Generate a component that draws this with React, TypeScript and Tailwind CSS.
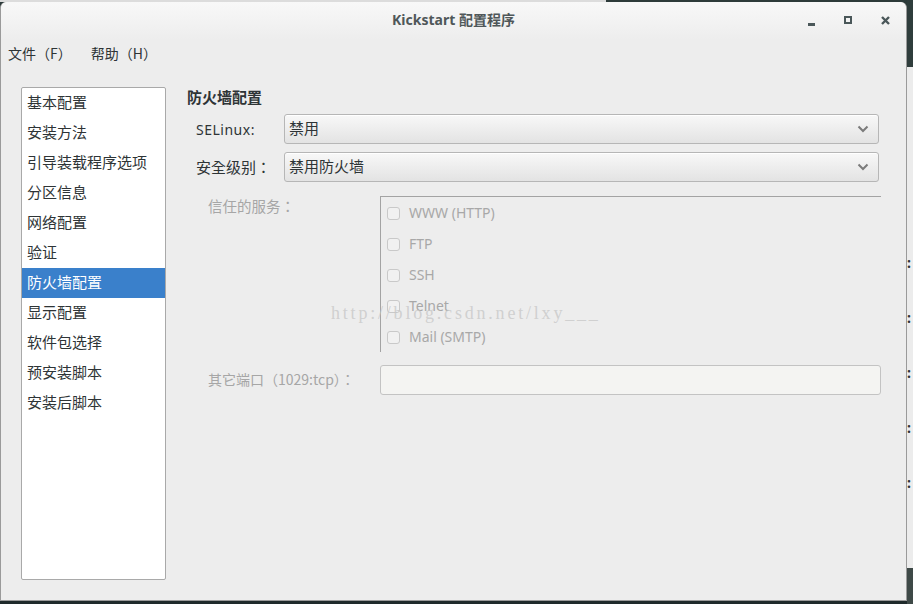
import React from 'react';

const font = { fontFamily: '"Noto Sans", "Noto Sans CJK SC", sans-serif' };
// centred full-width punctuation, as in the original GTK rendering
const cjk = { fontFamily: '"Noto Sans CJK TC", "Noto Sans", sans-serif' };

const navItems = [
  '基本配置',
  '安装方法',
  '引导装载程序选项',
  '分区信息',
  '网络配置',
  '验证',
  '防火墙配置',
  '显示配置',
  '软件包选择',
  '预安装脚本',
  '安装后脚本',
];

const services = ['WWW (HTTP)', 'FTP', 'SSH', 'Telnet', 'Mail (SMTP)'];

function Chevron() {
  return (
    <svg width="12" height="8" viewBox="0 0 12 8" className="shrink-0">
      <polyline points="1.5,1.5 6,6 10.5,1.5" fill="none" stroke="#7b7b7b" strokeWidth="2" />
    </svg>
  );
}

function Combo({ value }: { value: string }) {
  return (
    <div className="flex-1 h-[30px] flex items-center justify-between pl-[4px] pr-[9px] rounded-[3px] border border-[#b6b6b6] bg-gradient-to-b from-[#f8f8f8] to-[#e3e3e3] shadow-[inset_0_1px_0_#ffffff] text-[15px] text-[#2e3436]">
      <span className="-mt-[1px]">{value}</span>
      <Chevron />
    </div>
  );
}

export default function App() {
  return (
    <div className="w-[913px] h-[604px] flex overflow-hidden bg-[#2d3b3a]" style={font}>
      {/* main column */}
      <div className="w-[907px] flex flex-col">
        <div className="h-[2px] flex">
          <div className="w-[606px] bg-[#dcdcdc]" />
          <div className="flex-1 bg-[#2d3b3a]" />
        </div>

        {/* window */}
        <div className="flex-1 flex flex-col bg-[#ededed] rounded-t-[6px] border-l border-r border-b border-[#9a9a9a]">
          {/* title bar */}
          <div className="h-[38px] relative flex items-center justify-center pb-[4px] rounded-t-[6px] bg-gradient-to-b from-[#f8f8f8] to-[#ededed]">
            <span className="text-[14px] font-bold text-[#4f5759]">Kickstart 配置程序</span>
            <div className="absolute right-[16px] top-0 h-full flex items-center gap-[29px] pb-[2px] text-[#4a5759]">
              <div className="w-[7px] h-[3px] mt-[8px] bg-[#4a5759]" />
              <div className="w-[8px] h-[8px] border-[2.5px] border-[#4a5759]" />
              <svg width="9" height="9" viewBox="0 0 9 9">
                <path d="M1 1 L8 8 M8 1 L1 8" stroke="#4a5759" strokeWidth="2.4" />
              </svg>
            </div>
          </div>

          {/* menu bar */}
          <div className="h-[28px] flex items-center gap-[19px] px-[7px] pb-[2px] text-[14px] text-[#2e3436]" style={cjk}>
            <span>文件（F）</span>
            <span>帮助（H）</span>
          </div>

          {/* content */}
          <div className="flex-1 flex pl-[20px] pt-[19px] pb-[20px] gap-[21px] relative">
            <div className="w-[145px] bg-white border border-[#a9a9a9] rounded-[2px] text-[15px] text-[#2e3436]">
              {navItems.map((item) => (
                <div
                  key={item}
                  className={
                    item === '防火墙配置'
                      ? 'h-[30px] flex items-center pl-[5px] pb-[2px] bg-[#3a80cb] text-white'
                      : 'h-[30px] flex items-center pl-[5px] pb-[2px]'
                  }
                >
                  {item}
                </div>
              ))}
            </div>

            <div className="flex-1 flex flex-col pr-[25px]">
              <div className="h-[20px] flex items-center text-[15px] font-bold text-[#2e3436]">防火墙配置</div>

              <div className="mt-[7px] flex items-center pl-[9px] pr-[2px]">
                <span className="w-[88px] text-[14px] text-[#2e3436] tracking-[0.5px]">SELinux:</span>
                <Combo value="禁用" />
              </div>

              <div className="mt-[8px] flex items-center pl-[9px] pr-[2px]">
                <span className="w-[88px] text-[15px] text-[#2e3436]" style={cjk}>安全级别：</span>
                <Combo value="禁用防火墙" />
              </div>

              <div className="mt-[14px] flex pl-[21px]">
                <span className="w-[172px] -mt-[1px] text-[14.5px] text-[#a6a6a6]" style={cjk}>信任的服务：</span>
                <div className="flex-1 h-[156px] border-l border-t border-[#a3a3a3] pt-[1px] pl-[6px]">
                  {services.map((s) => (
                    <div key={s} className="h-[31px] flex items-center gap-[9px]">
                      <div className="w-[13px] h-[13px] rounded-[3px] border border-[#c9c9c9] bg-[#f1f1f1]" />
                      <span className="text-[14px] text-[#a8a8a8] -mt-[2px]">{s}</span>
                    </div>
                  ))}
                </div>
              </div>

              <div className="mt-[13px] flex items-center pl-[21px]">
                <span className="w-[172px] text-[14px] text-[#a6a6a6] -mt-[2px]" style={cjk}>其它端口（1029:tcp）：</span>
                <div className="flex-1 h-[30px] rounded-[3px] border border-[#c3c3c3] bg-[#f4f4f2]" />
              </div>
            </div>

            {/* watermark */}
            <div
              className="absolute left-[330px] top-[232px] text-[18px] tracking-[2.8px] text-[#c8c8c8]/80 pointer-events-none"
              style={{ fontFamily: '"Liberation Serif", serif' }}
            >
              http://blog.csdn.net/lxy___
            </div>
          </div>
        </div>

        <div className="h-[3px] bg-[#1f2a2b]" />
      </div>

      {/* desktop strip on the right */}
      <div className="flex-1 flex flex-col">
        <div className="h-[67px] bg-[#2f3d3c]" />
        <div className="flex-1 bg-[#ececec] pt-[186px] text-[14px] leading-[20px] text-[#2e3436] font-bold overflow-hidden">
          <div className="h-[55px]">:</div>
          <div className="h-[55px]">:</div>
          <div className="h-[55px]">:</div>
          <div className="h-[55px]">:</div>
          <div className="h-[55px]">:</div>
        </div>
        <div className="h-[36px] bg-[#3e4947]" />
      </div>
    </div>
  );
}
